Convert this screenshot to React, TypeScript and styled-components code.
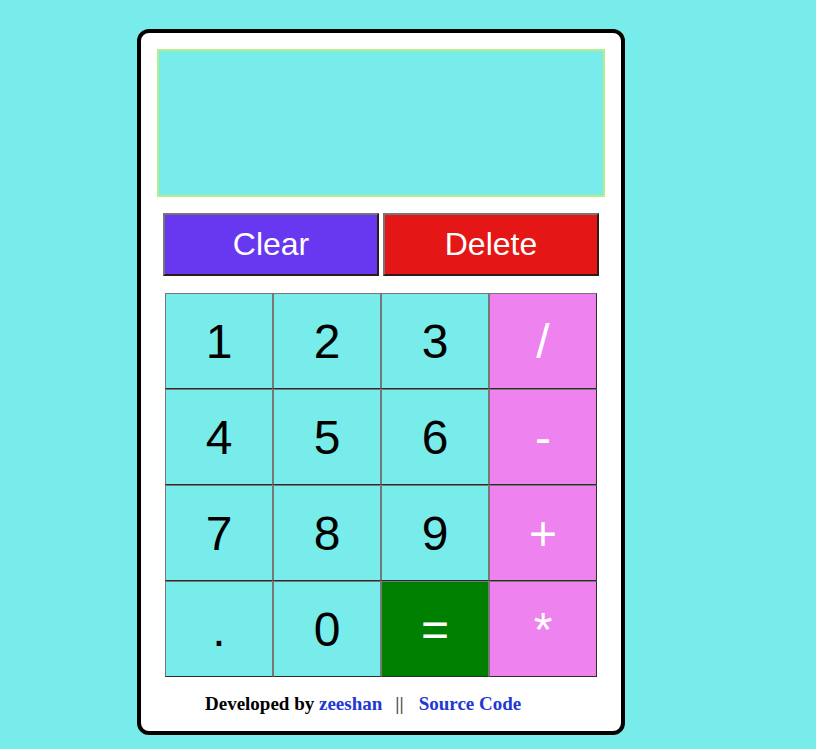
import React, { useState } from 'react';
import styled, { createGlobalStyle } from 'styled-components';

const GlobalStyle = createGlobalStyle`
  html, body {
    margin: 0;
    padding: 0;
    background: #78ecea;
  }
  body {
    font-family: 'Liberation Sans', Arial, sans-serif;
  }
`;

const Page = styled.div`
  display: flex;
  padding: 29px 0 0 137px;
  min-height: 749px;
  box-sizing: border-box;
`;

const Card = styled.div`
  display: flex;
  flex-direction: column;
  width: 488px;
  height: 706px;
  box-sizing: border-box;
  padding: 16px 16px 0;
  background: #fff;
  border: 4px solid #000;
  border-radius: 12px;
`;

const Display = styled.input`
  height: 148px;
  box-sizing: border-box;
  border: 2px solid #b6ee8c;
  background: #78ecea;
  font-family: 'Liberation Sans', Arial, sans-serif;
  font-size: 40px;
  text-align: right;
  padding: 0 12px;
  outline: none;
`;

const ActionRow = styled.div`
  display: flex;
  gap: 4px;
  margin: 16px 6px 0;
`;

const ActionButton = styled.button<{ $bg: string }>`
  flex: 1;
  height: 63px;
  background: ${(p) => p.$bg};
  color: #fff;
  font-family: 'Liberation Sans', Arial, sans-serif;
  font-size: 32px;
  border: 2px solid;
  border-color: #767676 #2f1a1a #2f1a1a #767676;
  cursor: pointer;
`;

const Keypad = styled.div`
  display: grid;
  grid-template-columns: repeat(4, 108px);
  grid-auto-rows: 96px;
  margin: 17px 8px 0;
`;

const Key = styled.button<{ $bg: string; $fg: string }>`
  background: ${(p) => p.$bg};
  color: ${(p) => p.$fg};
  font-family: 'Liberation Sans', Arial, sans-serif;
  font-size: 48px;
  border: 1px solid;
  border-color: #777 #777 #2b2b2b #777;
  padding: 0;
  cursor: pointer;

  &:nth-child(4n) {
    border-right-color: #2b2b2b;
  }
`;

const Footer = styled.p`
  margin: 16px 0 0;
  padding-left: 48px;
  font-family: 'Liberation Serif', 'Times New Roman', serif;
  font-weight: bold;
  font-size: 19px;
  color: #000;
`;

const Link = styled.a`
  color: #2238d4;
  text-decoration: none;
`;

const Separator = styled.span`
  color: #555;
  margin: 0 15px 0 13px;
`;

type KeyDef = { label: string; kind: 'num' | 'op' | 'eq' };

const keys: KeyDef[] = [
  { label: '1', kind: 'num' },
  { label: '2', kind: 'num' },
  { label: '3', kind: 'num' },
  { label: '/', kind: 'op' },
  { label: '4', kind: 'num' },
  { label: '5', kind: 'num' },
  { label: '6', kind: 'num' },
  { label: '-', kind: 'op' },
  { label: '7', kind: 'num' },
  { label: '8', kind: 'num' },
  { label: '9', kind: 'num' },
  { label: '+', kind: 'op' },
  { label: '.', kind: 'num' },
  { label: '0', kind: 'num' },
  { label: '=', kind: 'eq' },
  { label: '*', kind: 'op' },
];

const colours = {
  num: { bg: '#78ecea', fg: '#000' },
  op: { bg: '#ee82ee', fg: '#fff' },
  eq: { bg: '#008000', fg: '#fff' },
};

const App: React.FC = () => {
  const [value, setValue] = useState('');

  const press = (k: KeyDef) => {
    if (k.kind === 'eq') {
      try {
        // eslint-disable-next-line no-new-func
        setValue(String(Function(`return (${value})`)()));
      } catch {
        setValue('Error');
      }
      return;
    }
    setValue((v) => v + k.label);
  };

  return (
    <>
      <GlobalStyle />
      <Page>
        <Card>
          <Display type='text' value={value} readOnly />
          <ActionRow>
            <ActionButton $bg='#6838f0' onClick={() => setValue('')}>
              Clear
            </ActionButton>
            <ActionButton $bg='#e41616' onClick={() => setValue((v) => v.slice(0, -1))}>
              Delete
            </ActionButton>
          </ActionRow>
          <Keypad>
            {keys.map((k) => (
              <Key
                key={k.label}
                $bg={colours[k.kind].bg}
                $fg={colours[k.kind].fg}
                onClick={() => press(k)}
              >
                {k.label}
              </Key>
            ))}
          </Keypad>
          <Footer>
            Developed by <Link href='#'>zeeshan</Link>
            <Separator>||</Separator>
            <Link href='#'>Source Code</Link>
          </Footer>
        </Card>
      </Page>
    </>
  );
};

export default App;
